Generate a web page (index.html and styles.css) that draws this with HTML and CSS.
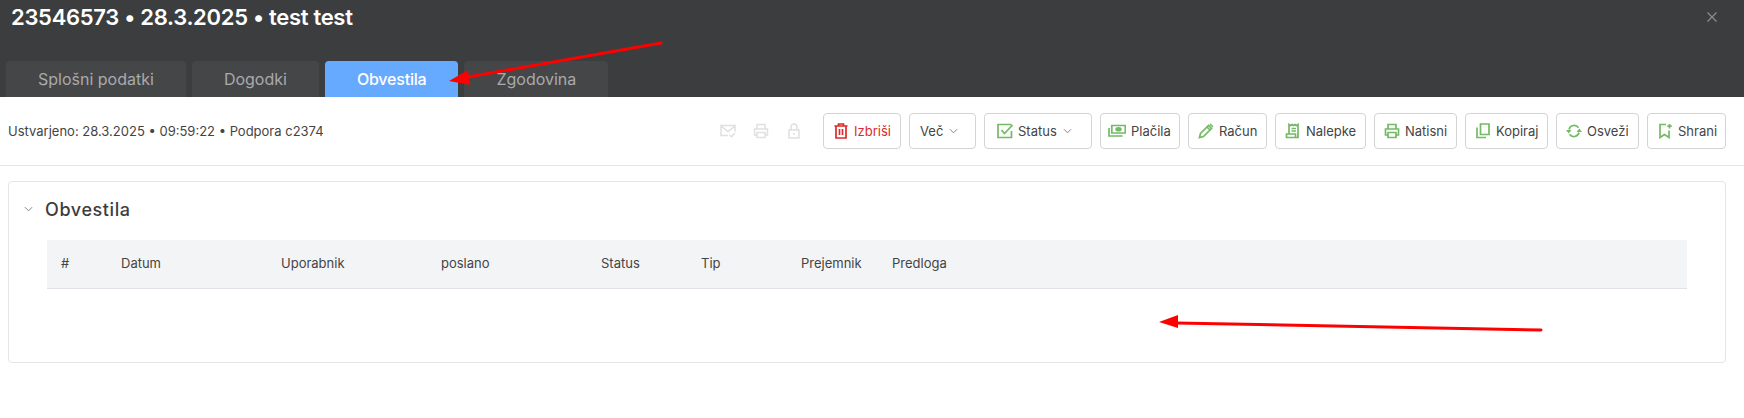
FILE: index.html
```html
<!DOCTYPE html>
<html lang="sl">
<head>
    <meta charset="UTF-8">
    <title>23546573 • 28.3.2025 • test test</title>
    <link rel="stylesheet" href="styles.css">
</head>
<body>
    <div class="page">
        <div class="modal-head">
            <div class="title-row">
                <h1>23546573 • 28.3.2025 • test test</h1>
                <svg class="close" viewBox="0 0 10 10"><path d="M.5.5l9 9M9.500.5l-9 9"/></svg>
            </div>
            <div class="tabs">
                <div class="tab">Splošni podatki</div>
                <div class="tab">Dogodki</div>
                <div class="tab active">Obvestila</div>
                <div class="tab">Zgodovina</div>
            </div>
        </div>

        <div class="toolbar">
            <div class="meta">Ustvarjeno: 28.3.2025 • 09:59:22 • Podpora c2374</div>
            <div class="faded-icons">
                <svg viewBox="0 0 16 16"><path d="M8 12.500H1V2.500h14v6M1 3l7 5.500L15 3M9.500 12l2 1.800 3.500-3.800"/></svg>
                <svg viewBox="0 0 16 16"><path d="M4 6V1.500h8V6M4 12H1.500V6h13v6H12M4 9.500h8v5H4z"/></svg>
                <svg viewBox="0 0 16 16"><path d="M3 7h10v8H3zM5 7V4a3 3 0 0 1 6 0v3M8 10v2"/></svg>
            </div>
            <button class="btn btn-delete">
                <svg class="icon" viewBox="0 0 16 16"><path d="M1.500 3h13M5.500 3V1h5v2M3 3v12h10V3M6.500 6v6M9.500 6v6"/></svg>Izbriši
            </button>
            <button class="btn btn-more">Več<svg class="caret" viewBox="0 0 10 6"><path d="M1 1l4 4 4-4"/></svg></button>
            <button class="btn btn-status">
                <svg class="icon" viewBox="0 0 16 16"><path d="M14.500 8v6.500H1V1.500h13.500M4.500 7l3 3.500L15.500 2"/></svg>Status<svg class="caret" viewBox="0 0 10 6"><path d="M1 1l4 4 4-4"/></svg>
            </button>
            <button class="btn btn-payments">
                <svg class="icon wide" viewBox="0 0 18 14"><path d="M1 4v8h13.500M3.800 1.500h13.500v7.500H3.800z"/><ellipse class="solid" cx="10.500" cy="5.200" rx="3.200" ry="2.300"/></svg>Plačila
            </button>
            <button class="btn btn-invoice">
                <svg class="icon" viewBox="0 0 16 16"><path d="M1.500 14.500l1-4L10.500 2.500l3 3-8 8zM9 4l3 3M12 1l3 3"/></svg>Račun
            </button>
            <button class="btn btn-labels">
                <svg class="icon" viewBox="0 0 16 16"><path d="M4 11V1.500l1.500 1 1.500-1 1.500 1 1.500-1 1.500 1 1.500-1v13H1.500V11h9v3.500M6.500 5.500h4.500M6.500 8h4.500"/></svg>Nalepke
            </button>
            <button class="btn btn-print">
                <svg class="icon" viewBox="0 0 16 16"><path d="M4 6V1.500h8V6M4 12H1.500V6h13v6H12M4 9.500h8v5H4z"/></svg>Natisni
            </button>
            <button class="btn btn-copy">
                <svg class="icon" viewBox="0 0 16 16"><path d="M5.500 1h8.500v10.500H5.500zM2 4.500v10h9"/></svg>Kopiraj
            </button>
            <button class="btn btn-refresh">
                <svg class="icon" viewBox="0 0 16 16"><path d="M3 6.500a5.300 5.300 0 0 1 9.500-1.800M13 9.500A5.300 5.300 0 0 1 3.500 11.300"/><path class="solid" d="M0 7h5.500l-2.800 3.500zM10.500 9H16l-2.700-3.500z"/></svg>Osveži
            </button>
            <button class="btn btn-save">
                <svg class="icon" viewBox="0 0 16 16"><path d="M9 1.500H3V14.500l4.500-3 4.500 3V7.500M12.500 1v4.500M10.300 3.200h4.500"/></svg>Shrani
            </button>
        </div>

        <div class="card">
            <div class="card-title">
                <svg class="caret" viewBox="0 0 10 6"><path d="M1 1l4 4 4-4"/></svg>
                <h2>Obvestila</h2>
            </div>
            <table class="list">
                <thead>
                    <tr>
                        <th class="col-nr">#</th>
                        <th class="col-l">Datum</th>
                        <th class="col-l">Uporabnik</th>
                        <th class="col-l">poslano</th>
                        <th class="col-m">Status</th>
                        <th class="col-m">Tip</th>
                        <th class="col-s">Prejemnik</th>
                        <th>Predloga</th>
                    </tr>
                </thead>
            </table>
        </div>

        <svg class="arrows" viewBox="0 0 1744 418">
            <path class="shaft" d="M661 43L462 78"/>
            <path class="head" d="M449 81l19-11 2 15z"/>
            <path class="shaft" d="M1541 330L1176 323"/>
            <path class="head" d="M1159 322l19-7v13z"/>
        </svg>
    </div>
</body>
</html>
```

FILE: styles.css
```css
* {
    margin: 0;
    padding: 0;
    box-sizing: border-box;
}

body {
    font-family: Inter, "Liberation Sans", sans-serif;
    background: white;
    color: #444;
}

.page {
    position: relative;
    height: 418px;
    overflow: hidden;
}

.modal-head {
    height: 97px;
    background: #3c3d3f;
    padding-left: 6px;
    display: flex;
    flex-direction: column;
    justify-content: space-between;
}

.title-row {
    display: flex;
    justify-content: space-between;
    align-items: center;
    padding: 3px 27px 0 5px;
}

.title-row h1 {
    font-size: 22px;
    line-height: 28px;
    font-weight: 600;
    letter-spacing: -0.3px;
    color: white;
}

.close {
    width: 10px;
    height: 10px;
    fill: none;
    stroke: #8c8d8f;
    stroke-width: 1.2;
}

.tabs {
    display: flex;
    gap: 6px;
}

.tab {
    height: 36px;
    line-height: 36px;
    padding: 0 32px;
    background: #454648;
    border-radius: 4px 4px 0 0;
    color: #a9aaac;
    font-size: 16px;
}

.tab.active {
    background: #66aaff;
    color: white;
    font-weight: 500;
    letter-spacing: -0.2px;
}

.toolbar {
    height: 69px;
    padding: 16px 18px 16px 8px;
    border-bottom: 1px solid #e5e6e8;
    display: flex;
    align-items: center;
    gap: 8px;
}

.meta {
    font-size: 13px;
    color: #444;
    margin-right: auto;
}

.faded-icons {
    display: flex;
    gap: 17px;
    margin-right: 13px;
}

.faded-icons svg {
    width: 16px;
    height: 16px;
    fill: none;
    stroke: #e0e0e0;
    stroke-width: 1.5;
}

.btn {
    height: 36px;
    display: flex;
    align-items: center;
    gap: 6px;
    padding: 0 0 0 10px;
    background: white;
    border: 1px solid #d4d4d6;
    border-radius: 4px;
    font-family: inherit;
    font-size: 13px;
    color: #444;
}

.btn-delete {
    width: 78px;
    color: #dc2a2a;
}

.btn-more {
    width: 67px;
}

.btn-status {
    width: 108px;
    padding-left: 13px;
}

.btn-payments {
    width: 80px;
}

.btn-invoice {
    width: 79px;
}

.btn-labels {
    width: 91px;
}

.btn-print,
.btn-copy,
.btn-refresh {
    width: 83px;
}

.btn-save {
    width: 79px;
}

.icon {
    width: 16px;
    height: 16px;
    margin: 0 -1px;
    fill: none;
    stroke: #74b966;
    stroke-width: 1.7;
    flex-shrink: 0;
}

.icon.wide {
    width: 18px;
    margin: 0 -1px 0 -3px;
}

.icon .solid {
    fill: #74b966;
    stroke: none;
}

.btn-delete .icon {
    stroke: #dc2a2a;
}

.caret {
    width: 9px;
    height: 6px;
    fill: none;
    stroke: #777;
    stroke-width: 1;
}

.card {
    margin: 15px 18px 0 8px;
    height: 182px;
    border: 1px solid #e5e6e8;
    border-radius: 4px;
    padding: 0 38px;
}

.card-title {
    height: 58px;
    padding-bottom: 4px;
    display: flex;
    align-items: center;
    gap: 12px;
    margin-left: -23px;
}

.card-title h2 {
    font-size: 18px;
    font-weight: 500;
    letter-spacing: 0.6px;
    color: #3c3d3f;
}

.list {
    width: 100%;
    border-collapse: collapse;
    table-layout: fixed;
}

.list th {
    height: 48px;
    padding: 0 0 1px 14px;
    background: #f3f4f6;
    border-bottom: 1px solid #dfe2e6;
    font-size: 13px;
    font-weight: 400;
    text-align: left;
    color: #444;
}

.col-nr {
    width: 60px;
}

.col-l {
    width: 160px;
}

.col-m {
    width: 100px;
}

.col-s {
    width: 91px;
}

.arrows {
    position: absolute;
    left: 0;
    top: 0;
    width: 1744px;
    height: 418px;
    pointer-events: none;
}

.shaft {
    fill: none;
    stroke: #ff0000;
    stroke-width: 3;
    stroke-linecap: round;
}

.head {
    fill: #ff0000;
}
```
